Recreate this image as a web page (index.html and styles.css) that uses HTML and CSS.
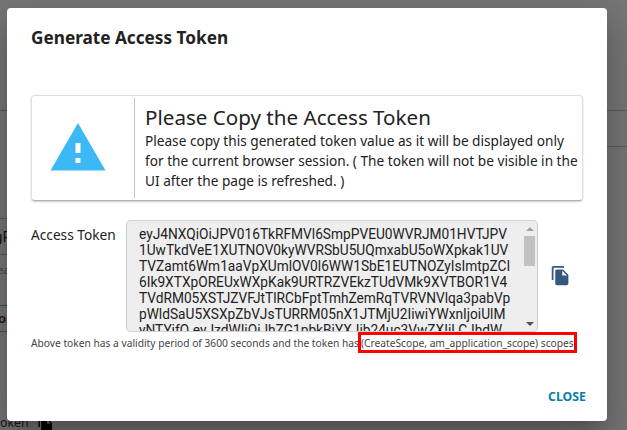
FILE: index.html
```html
<!DOCTYPE html>
<html lang="en">
<head>
<meta charset="utf-8">
<title>Generate Access Token</title>
<link rel="stylesheet" href="styles.css">
</head>
<body>
<div class="page" aria-hidden="true">
  <div class="rule rule-top"></div>
  <div class="rule rule-second"></div>
  <div class="rule rule-input"></div>
  <div class="page-text key">gP</div>
  <div class="rule rule-input-end"></div>
  <div class="page-text hint">ea</div>
  <div class="page-button">or</div>
  <div class="page-text token-label">oken</div>
  <svg class="page-copy" viewBox="0 0 24 24"><path d="M16 1H4c-1.100 0-2 .9-2 2v14h2V3h12V1zm-1 4l6 6v10c0 1.100-.9 2-2 2H7.990C6.890 23 6 22.100 6 21l.01-14c0-1.100.89-2 1.990-2h7zm-1 7h5.500L14 6.500V12z"/></svg>
</div>
<main class="dialog" role="dialog">
  <h2 class="title">Generate Access Token</h2>
  <section class="notice">
    <div class="notice-icon">
      <svg viewBox="0 0 24 24"><path d="M1 21h22L12 2 1 21zm12-3h-2v-2h2v2zm0-4h-2v-4h2v4z"/></svg>
    </div>
    <div class="notice-body">
      <h3>Please Copy the Access Token</h3>
      <p>Please copy this generated token value as it will be displayed only<br>for the current browser session. ( The token will not be visible in the<br>UI after the page is refreshed. )</p>
    </div>
  </section>
  <div class="token-row">
    <div class="label">Access Token</div>
    <div class="token-box">
      <div class="token">eyJ4NXQiOiJPV016TkRFMVl6SmpPVEU0WVRJM01HVTJPV<br>1UwTkdVeE1XUTNOV0kyWVRSbU5UQmxabU5oWXpkak1UV<br>TVZamt6Wm1aaVpXUmlOV0l6WW1SbE1EUTNOZyIsImtpZCI<br>6Ik9XTXpOREUxWXpKak9URTRZVEkzTUdVMk9XVTBOR1V4<br>TVdRM05XSTJZVFJtTlRCbFptTmhZemRqTVRVNVlqa3pabVp<br>pWldSaU5XSXpZbVJsTURRM05nX1JTMjU2IiwiYWxnIjoiUlM<br>yNTYifQ.eyJzdWIiOiJhZG1pbkBjYXJib24uc3VwZXIiLCJhdW</div>
      <div class="scrollbar"><i class="up"></i><i class="thumb"></i><i class="down"></i></div>
    </div>
    <svg class="copy" viewBox="0 0 24 24"><path d="M16 1H4c-1.100 0-2 .9-2 2v14h2V3h12V1zm-1 4l6 6v10c0 1.100-.9 2-2 2H7.990C6.890 23 6 22.100 6 21l.01-14c0-1.100.89-2 1.990-2h7zm-1 7h5.500L14 6.500V12z"/></svg>
  </div>
  <div class="validity"><span class="validity-text">Above token has a validity period of 3600 seconds and the token has</span><span class="scopes"><span class="scopes-text">(CreateScope, am_application_scope) scopes.</span></span></div>
  <div class="actions"><button class="close">CLOSE</button></div>
</main>
</body>
</html>
```
FILE: styles.css
```css
* { box-sizing: border-box; }
body {
  margin: 0;
  width: 627px;
  height: 430px;
  overflow: hidden;
  background: #777;
  color: #222;
  font-family: "Noto Sans", "Open Sans", sans-serif;
}
h2, h3, p { margin: 0; font-weight: 400; }

.page { position: absolute; inset: 0; overflow: hidden; color: #161616; }
.page > * { position: absolute; }
.rule { left: 0; height: 1px; background: #5c5c5c; }
.rule-top { top: 110px; width: 627px; }
.rule-second { top: 146px; left: 300px; width: 327px; }
.rule-input { top: 218px; width: 30px; }
.rule-input-end { top: 254px; width: 30px; }
.page-text { font-size: 12px; line-height: 16px; white-space: nowrap; }
.key { left: -6px; top: 229px; font-size: 15px; font-family: Roboto, sans-serif; }
.hint { left: -3px; top: 262px; font-size: 11px; color: #484848; }
.page-button {
  left: -2px; top: 305px; width: 30px; height: 27px;
  border: solid #27586a; border-width: 1px 0;
  font-size: 13px; font-weight: 600; line-height: 25px;
}
.token-label { left: 0; top: 415px; font-size: 12.300px; }
.page-copy { left: 37px; top: 415px; width: 17px; height: 17px; }

.dialog {
  position: relative;
  display: flex;
  flex-direction: column;
  width: 600px;
  height: 413px;
  margin: 8px 0 0 7px;
  padding: 18px 24px 0;
  background: #fff;
  border-radius: 4px;
  box-shadow: 0 11px 15px -7px rgba(0,0,0,.2), 0 24px 38px 3px rgba(0,0,0,.14), 0 9px 46px 8px rgba(0,0,0,.12);
}
.title { font-size: 17.200px; font-weight: 700; line-height: 24px; white-space: nowrap; }

.notice {
  display: flex;
  width: 552px;
  height: 106px;
  margin-top: 45px;
  padding: 2px 0;
  border: 1px solid #dedede;
  border-bottom-color: #b0b0b0;
  border-radius: 4px;
  box-shadow: 0 1px 2px rgba(0,0,0,.2);
}
.notice-icon {
  display: flex;
  flex: none;
  align-items: center;
  justify-content: center;
  width: 103px;
  padding-right: 10px;
  border-right: 1px solid #c4c4c4;
}
.notice-icon svg { width: 60px; height: 60px; fill: #3cb8f5; }
.notice-body { padding: 5px 0 0 10px; white-space: nowrap; }
.notice-body h3 { font-size: 20.600px; line-height: 28px; }
.notice-body p { font-size: 13.650px; line-height: 20px; }

.token-row { display: flex; margin-top: 19px; }
.label { width: 95px; padding-top: 5px; font-size: 13.700px; line-height: 20px; white-space: nowrap; }
.token-box {
  display: flex;
  justify-content: space-between;
  width: 412px;
  height: 112px;
  overflow: hidden;
  border: 1px solid #ced4da;
  border-radius: 4px;
  background: #eee;
}
.token {
  padding: 5px 0 0 12px;
  font-family: Roboto, sans-serif;
  font-size: 13.720px;
  line-height: 16px;
  white-space: nowrap;
}
.scrollbar {
  display: flex;
  flex-direction: column;
  align-items: center;
  flex: none;
  width: 15px;
  padding: 6px 0 5px;
}
.up { border: solid transparent; border-width: 0 4px 4px; border-bottom-color: #a3a3a3; }
.thumb { width: 11px; height: 30px; margin-top: 5px; background: #c1c1c1; }
.down { margin-top: auto; border: solid transparent; border-width: 4px 4px 0; border-top-color: #505050; }
.copy { flex: none; width: 21px; height: 21px; margin: 45px 0 0 12px; fill: #34597f; }

.validity { display: flex; align-items: flex-start; height: 22px; color: #444; font-size: 10.230px; line-height: 16px; white-space: nowrap; }
.validity-text { width: 327px; padding-top: 3px; }
.scopes { width: 219px; height: 21px; border: 3px solid #f00; }
.scopes-text { display: block; line-height: 16px; }
.actions { display: flex; justify-content: flex-end; margin-top: 31px; }
.close { margin-right: -3px; padding: 0; border: 0; background: none; color: #067fa8; font: 700 12.300px/24px "Noto Sans", sans-serif; }
```
